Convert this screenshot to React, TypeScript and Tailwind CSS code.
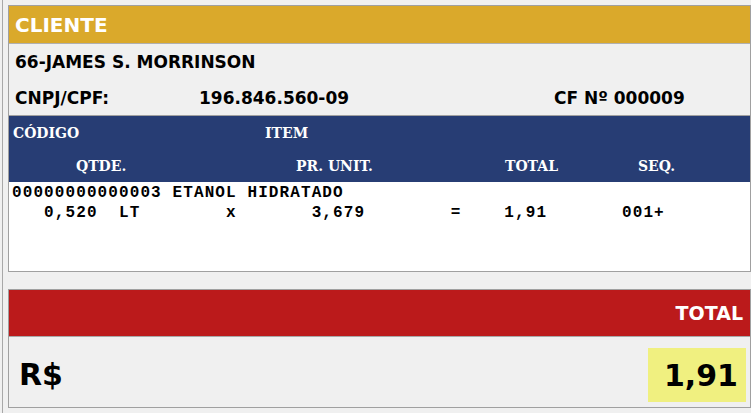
export default function App() {
  const sans = { fontFamily: '"DejaVu Sans", Verdana, sans-serif' };
  const serif = { fontFamily: '"DejaVu Serif", "Liberation Serif", serif' };
  const mono = { fontFamily: '"Liberation Mono", "Courier New", monospace' };

  const line1 = "00000000000003 ETANOL HIDRATADO";
  const line2 = "   0,520  LT        x       3,679        =    1,91       001+";

  return (
    <div className="w-[751px] h-[413px] bg-[#f0f0f0] overflow-hidden" style={sans}>
      <div className="ml-[2px] h-full border-l border-[#a8a8a8] pt-[5px]">
        {/* cliente + itens */}
        <div className="ml-[5px] w-[743px] border border-[#a0a0a0] bg-[#f0f0f0]">
          <div className="h-[38px] bg-[#daa92b] border-b border-[#b0b0b0] flex items-center pl-[6px]">
            <span className="text-white font-bold text-[20px]">CLIENTE</span>
          </div>
          <div className="h-[38px] flex items-center pl-[6px]">
            <span className="text-[17px] font-bold text-black">66-JAMES S. MORRINSON</span>
          </div>
          <div className="h-[33px] flex items-center pl-[6px] text-[17px] font-bold text-black">
            <span className="w-[184px]">CNPJ/CPF:</span>
            <span className="w-[355px]">196.846.560-09</span>
            <span>CF Nº 000009</span>
          </div>
          <div className="bg-[#273d74] border-t border-[#a0a0a0] text-white font-bold text-[14px]" style={serif}>
            <div className="h-[34px] flex items-center pl-[4px]">
              <span className="w-[252px]">CÓDIGO</span>
              <span>ITEM</span>
            </div>
            <div className="h-[32px] flex items-center pl-[67px]">
              <span className="w-[220px]">QTDE.</span>
              <span className="w-[209px]">PR. UNIT.</span>
              <span className="w-[133px]">TOTAL</span>
              <span>SEQ.</span>
            </div>
          </div>
          <div
            className="h-[89px] bg-white pl-[3px] pt-[1px] text-[16px] font-bold leading-[20px] tracking-[1.1px] text-black whitespace-pre"
            style={mono}
          >
            <div>{line1}</div>
            <div>{line2}</div>
          </div>
        </div>

        {/* total */}
        <div className="ml-[5px] mt-[17px] w-[743px] border border-[#a0a0a0] bg-[#f0f0f0]">
          <div className="h-[47px] bg-[#bb1a1b] border-b border-[#a8a8a8] flex items-center justify-end pr-[7px]">
            <span className="text-white font-bold text-[19px]">TOTAL</span>
          </div>
          <div className="h-[70px] flex items-start justify-between pl-[10px] pr-[4px] pt-[11px]">
            <span className="text-[30px] font-bold text-black leading-[54px]">R$</span>
            <div className="w-[98px] h-[54px] bg-[#f0f080] flex items-center justify-end pr-[8px]">
              <span className="text-[30px] font-bold text-black">1,91</span>
            </div>
          </div>
        </div>
      </div>
    </div>
  );
}
